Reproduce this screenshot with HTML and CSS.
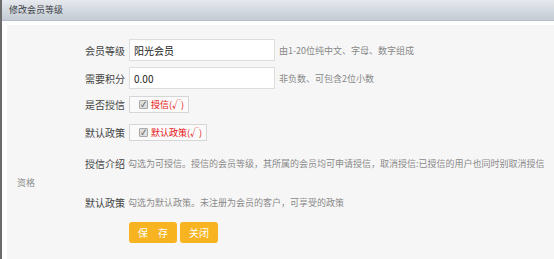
FILE: index.html
```html
<!DOCTYPE html>
<html lang="zh">

  <head>
    <meta charset="UTF-8">
    <title>修改会员等级</title>
    <link rel="stylesheet" href="styles.css">
  </head>

  <body>
    <div class="dialog">
      <div class="dialog-title">修改会员等级</div>

      <div class="dialog-body">
        <form class="level-form">
          <div class="form-row row-name">
            <label class="form-label">会员等级</label>
            <input class="text-input" type="text" value="阳光会员">
            <span class="hint">由1-20位纯中文、字母、数字组成</span>
          </div>

          <div class="form-row row-points">
            <label class="form-label">需要积分</label>
            <input class="text-input" type="text" value="0.00">
            <span class="hint">非负数、可包含2位小数</span>
          </div>

          <div class="form-row row-credit">
            <label class="form-label">是否授信</label>
            <span class="check-box"><span class="tick">✓</span>授信(√)</span>
          </div>

          <div class="form-row row-default">
            <label class="form-label">默认政策</label>
            <span class="check-box"><span class="tick">✓</span>默认政策(√)</span>
          </div>

          <p class="desc desc-credit"><span class="form-label">授信介绍</span><span class="desc-text">勾选为可授信。授信的会员等级，其所属的会员均可申请授信，取消授信:已授信的用户也同时别取消授信资格</span></p>

          <p class="desc desc-default"><span class="form-label">默认政策</span><span class="desc-text">勾选为默认政策。未注册为会员的客户，可享受的政策</span></p>

          <div class="actions">
            <button type="button" class="btn">保　存</button>
            <button type="button" class="btn">关闭</button>
          </div>
        </form>
      </div>
    </div>
  </body>

</html>
```

FILE: styles.css
```css
body {
  margin: 0;
  padding: 0;
  font-family: "Noto Sans CJK SC", "Noto Sans", sans-serif;
  background-color: #ffffff;
}

.dialog {
  height: 259px;
  border-left: 2px solid #6b6b6b;
  background: #ffffff;
  overflow: hidden;
}

.dialog-title {
  height: 20px;
  line-height: 20px;
  padding-left: 7px;
  font-size: 9px;
  color: #3a3f46;
  background: linear-gradient(#e6e9ee, #c4cbd4);
  border-bottom: 1px solid #b7bec8;
}

.dialog-body {
  margin: 4px 0 0 5px;
  height: 240px;
  background-color: #f6f6f6;
}

.level-form {
  padding: 11px 7px 0 10px;
}

.form-row {
  display: flex;
  align-items: center;
}

.row-name {
  height: 28px;
}

.row-points {
  height: 28px;
}

.row-credit {
  height: 25px;
}

.row-default {
  height: 31px;
}

.form-label {
  display: inline-block;
  width: 108px;
  text-align: right;
  font-size: 10px;
  color: #444444;
  margin-right: 4px;
}

.text-input {
  width: 136px;
  height: 20px;
  padding: 0 4px;
  border: 1px solid #dddddd;
  background: #ffffff;
  font-family: inherit;
  font-size: 10px;
  color: #222222;
  outline: none;
}

.hint {
  margin-left: 4px;
  font-size: 9px;
  color: #888888;
}

.check-box {
  display: inline-flex;
  align-items: center;
  height: 15px;
  padding: 0 4px 0 9px;
  border: 1px solid #d6d6d6;
  background: #fafafa;
  font-size: 9px;
  color: #e81010;
}

.tick {
  display: inline-block;
  width: 7px;
  height: 7px;
  margin-right: 3px;
  border: 1px solid #a9a9a9;
  border-radius: 1px;
  background: #dedede;
  color: #333333;
  font-size: 7px;
  line-height: 7px;
  text-align: center;
}

.desc {
  margin: 0;
  font-size: 9px;
  line-height: 19px;
  color: #8a8a8a;
}

.desc .form-label {
  margin-right: 0;
  line-height: 19px;
  vertical-align: top;
}

.desc-text {
  padding-left: 3px;
}

.desc-credit {
  margin-top: 6px;
}

.desc-default {
  margin-top: 1px;
}

.actions {
  display: flex;
  gap: 3px;
  margin: 10px 0 0 112px;
}

.btn {
  height: 21px;
  padding: 0 9px;
  border: none;
  border-radius: 3px;
  background-color: #f7b420;
  color: #ffffff;
  font-family: inherit;
  font-size: 10px;
  cursor: pointer;
}

.btn:hover {
  background-color: #eea512;
}
```
